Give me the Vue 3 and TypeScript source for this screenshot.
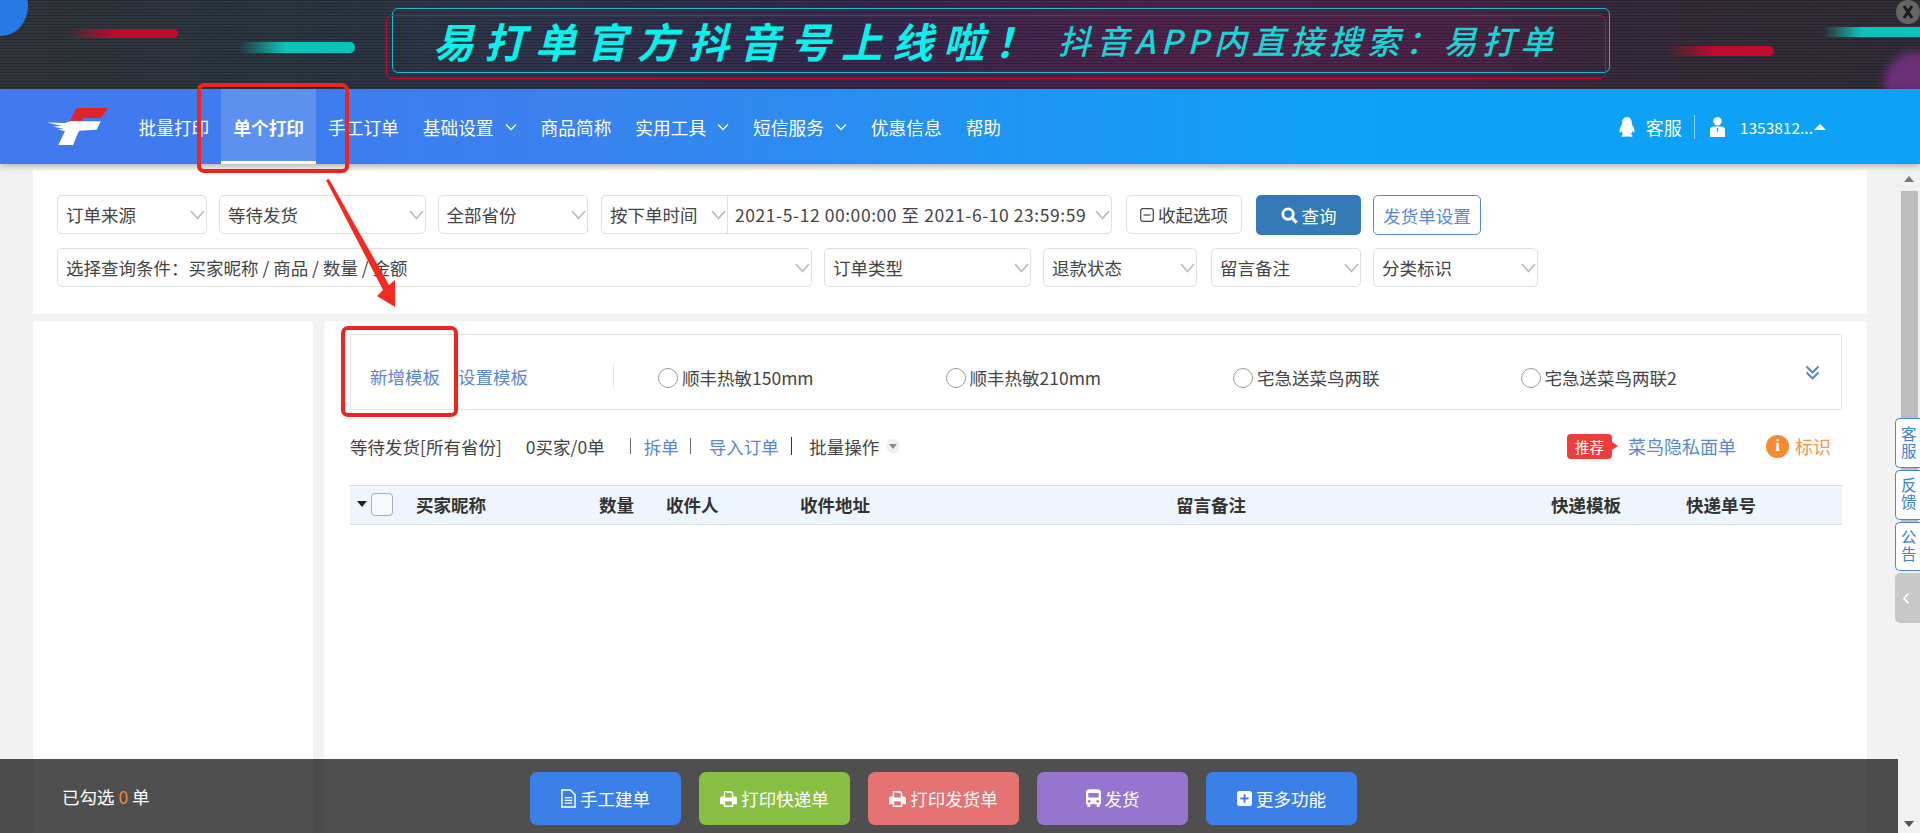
<script setup lang="ts">
interface NavItem { label: string; active?: boolean; caret?: boolean }
const navItems: NavItem[] = [
  { label: '批量打印' },
  { label: '单个打印', active: true },
  { label: '手工订单' },
  { label: '基础设置', caret: true },
  { label: '商品简称' },
  { label: '实用工具', caret: true },
  { label: '短信服务', caret: true },
  { label: '优惠信息' },
  { label: '帮助' },
]
const templates = ['顺丰热敏150mm', '顺丰热敏210mm', '宅急送菜鸟两联', '宅急送菜鸟两联2']
const headers = ['买家昵称', '数量', '收件人', '收件地址', '留言备注', '快递模板', '快递单号']
const sideTabs = ['客服', '反馈', '公告']
</script>

<template>
  <div class="page">
    <header class="banner">
      <span class="blob blob-blue"></span>
      <span class="blob blob-purple"></span>
      <span class="streak red r1"></span>
      <span class="streak teal t1"></span>
      <span class="streak teal t2"></span>
      <span class="streak red r2"></span>
      <div class="frame">
        <span class="title">易打单官方抖音号上线啦！</span>
        <span class="subtitle">抖音APP内直接搜索：易打单</span>
      </div>
      <span class="close">
        <svg viewBox="0 0 24 24" width="24" height="24"><path d="M8 6l8 12M16 6L8 18" stroke="#1c1c1c" stroke-width="3" /></svg>
      </span>
    </header>

    <nav class="nav">
      <svg class="logo" viewBox="0 0 62 38" width="62" height="38">
        <path d="M29.7 0H61L54 10H36L35 12.7H23z" fill="#e02327" />
        <path d="M23 13.3H53.7L49.7 21.7 32 22.7 26 37H11.3L18 23 10 21.5 17 21 6 18.5 15 18 0 14.5 18 15z" fill="#fff" />
      </svg>
      <a v-for="item in navItems" :key="item.label" class="nav-item" :class="{ active: item.active }">
        {{ item.label }}
        <svg v-if="item.caret" class="nav-caret" viewBox="0 0 12 8" width="12" height="8"><path d="M1 1.500l5 5 5-5" fill="none" stroke="#fff" stroke-width="1.300" /></svg>
      </a>
      <div class="nav-right">
        <svg viewBox="0 0 18 20" width="18" height="20"><path fill="#fff" d="M9 0C5.500 0 4.200 3 4.200 6c0 1-.6 2-1.600 4C1.600 12 1 15 2 15.500c.6.2 1.200-.8 1.600-1.600.3 1.400 1 2.600 1.800 3.300-1 .4-2 1-2 1.800C3.400 20 6 20 7.500 19.500c.5-.1 2.500-.1 3 0 1.500.5 4.100.5 4.100-.5 0-.8-1-1.400-2-1.800.8-.7 1.500-1.900 1.800-3.300.4.8 1 1.800 1.600 1.600 1-.5.4-3.500-.6-5.500-1-2-1.600-3-1.600-4C13.800 3 12.500 0 9 0z" /></svg>
        <span class="kefu">客服</span>
        <span class="nav-sep"></span>
        <svg viewBox="0 0 17 20" width="17" height="20"><circle cx="8.500" cy="4.200" r="4.200" fill="#fff" /><path fill="#fff" d="M1 20v-7c0-2 1.500-3.500 3.500-3.500h8c2 0 3.500 1.500 3.500 3.500v7z" /><path d="M8.500 10.500l-1 1.500 1 4 1-4z" fill="#2a9af0" /></svg>
        <span class="account">1353812...</span>
        <svg viewBox="0 0 12 6" width="12" height="6"><path d="M6 0l6 6H0z" fill="#fff" /></svg>
      </div>
    </nav>

    <main class="main">
      <section class="filters">
        <div class="filter-row">
          <div class="sel w150">订单来源<svg class="chev" viewBox="0 0 15 10"><path d="M1 1l6.500 7.500L14 1" /></svg></div>
          <div class="sel w206">等待发货<svg class="chev" viewBox="0 0 15 10"><path d="M1 1l6.500 7.500L14 1" /></svg></div>
          <div class="sel w150">全部省份<svg class="chev" viewBox="0 0 15 10"><path d="M1 1l6.500 7.500L14 1" /></svg></div>
          <div class="sel timepair">
            <span class="time-type">按下单时间<svg class="chev" viewBox="0 0 15 10"><path d="M1 1l6.500 7.500L14 1" /></svg></span>
            <span class="time-range">2021-5-12 00:00:00 至 2021-6-10 23:59:59<svg class="chev" viewBox="0 0 15 10"><path d="M1 1l6.500 7.500L14 1" /></svg></span>
          </div>
          <button class="btn-collapse ml2">
            <svg viewBox="0 0 14 14" width="14" height="14"><rect x=".7" y=".7" width="12.600" height="12.600" rx="2" fill="none" stroke="#444" stroke-width="1.200" /><path d="M3.500 7h7" stroke="#444" stroke-width="1.200" /></svg>
            收起选项
          </button>
          <button class="btn-query ml2">
            <svg viewBox="0 0 18 18" width="17" height="17"><circle cx="7.500" cy="7.500" r="5.500" fill="none" stroke="#fff" stroke-width="3" /><path d="M11.500 11.500L16.500 16.500" stroke="#fff" stroke-width="3.200" /></svg>
            查询
          </button>
          <button class="btn-outline">发货单设置</button>
        </div>
        <div class="filter-row">
          <div class="sel w755">选择查询条件：买家昵称 / 商品 / 数量 / 金额<svg class="chev" viewBox="0 0 15 10"><path d="M1 1l6.500 7.500L14 1" /></svg></div>
          <div class="sel w207">订单类型<svg class="chev" viewBox="0 0 15 10"><path d="M1 1l6.500 7.500L14 1" /></svg></div>
          <div class="sel w154">退款状态<svg class="chev" viewBox="0 0 15 10"><path d="M1 1l6.500 7.500L14 1" /></svg></div>
          <div class="sel w150 ml2">留言备注<svg class="chev" viewBox="0 0 15 10"><path d="M1 1l6.500 7.500L14 1" /></svg></div>
          <div class="sel w165">分类标识<svg class="chev" viewBox="0 0 15 10"><path d="M1 1l6.500 7.500L14 1" /></svg></div>
        </div>
      </section>

      <section class="work">
        <aside class="side"></aside>
        <div class="content">
          <div class="tpl-box">
            <a class="link">新增模板</a>
            <a class="link second">设置模板</a>
            <span class="tpl-sep"></span>
            <div class="tpl-list">
              <label v-for="t in templates" :key="t" class="radio"><i class="radio-dot"></i>{{ t }}</label>
            </div>
            <svg class="tpl-more" viewBox="0 0 15 15" width="15" height="15"><path d="M1.500 1.500l6 6 6-6M1.500 7.500l6 6 6-6" fill="none" stroke="#4a7fe0" stroke-width="1.800" /></svg>
          </div>

          <div class="toolbar">
            <div class="tools-left">
              <span>等待发货[所有省份]</span>
              <span class="count">0买家/0单</span>
              <span class="bar b1"></span>
              <a class="link">拆单</a>
              <span class="bar b2"></span>
              <a class="link">导入订单</a>
              <span class="bar b3"></span>
              <span>批量操作</span>
              <span class="mini-caret"><svg viewBox="0 0 10 6" width="8" height="5"><path d="M0 0h10L5 6z" fill="#888" /></svg></span>
            </div>
            <div class="tools-right">
              <span class="tag">推荐</span>
              <a class="link wide">菜鸟隐私面单</a>
              <span class="info"><i>i</i></span>
              <span class="mark wide">标识</span>
            </div>
          </div>

          <div class="thead">
            <div class="th-check"><i class="tri"></i><i class="checkbox"></i></div>
            <div v-for="h in headers" :key="h" class="th">{{ h }}</div>
          </div>
        </div>
      </section>
    </main>

    <footer class="bottom">
      <div class="picked">已勾选 <em>0</em> 单</div>
      <div class="actions">
        <button class="act blue">
          <svg viewBox="0 0 16 20" width="15" height="19"><path d="M1 1h9l5 5v13H1z" fill="none" stroke="#fff" stroke-width="1.600" /><path d="M4 9h8M4 12h8M4 15h8" stroke="#fff" stroke-width="1.400" /></svg>
          手工建单
        </button>
        <button class="act green">
          <svg viewBox="0 0 18 18" width="17" height="17"><path fill="#fff" fill-rule="evenodd" d="M4 1h8l2 2v4h2a2 2 0 0 1 2 2v6h-4v3H4v-3H0V9a2 2 0 0 1 2-2h2zM5.500 2.500V8h7V3.500h-1zM5.500 12v4.500h7V12z" /></svg>
          打印快递单
        </button>
        <button class="act red">
          <svg viewBox="0 0 18 18" width="17" height="17"><path fill="#fff" fill-rule="evenodd" d="M4 1h8l2 2v4h2a2 2 0 0 1 2 2v6h-4v3H4v-3H0V9a2 2 0 0 1 2-2h2zM5.500 2.500V8h7V3.500h-1zM5.500 12v4.500h7V12z" /></svg>
          打印发货单
        </button>
        <button class="act purple">
          <svg viewBox="0 0 16 20" width="15" height="19"><path fill="#fff" fill-rule="evenodd" d="M4 0h8c2 0 4 1 4 3v13h-1.500v3h-3v-3h-7v3h-3v-3H0V3c0-2 2-3 4-3zM2.500 4v5h11V4zM3.500 11.500a1.500 1.500 0 1 0 .01 0zM12.500 11.500a1.500 1.500 0 1 0 .01 0z" /></svg>
          发货
        </button>
        <button class="act blue">
          <svg viewBox="0 0 16 16" width="15" height="15"><path fill="#fff" fill-rule="evenodd" d="M3 0h10a3 3 0 0 1 3 3v10a3 3 0 0 1-3 3H3a3 3 0 0 1-3-3V3a3 3 0 0 1 3-3zM7 3.500v3.500H3.500v2H7v3.500h2V9h3.500V7H9V3.500z" /></svg>
          更多功能
        </button>
      </div>
    </footer>

    <div class="scrollbar">
      <i class="sb-up"></i>
      <i class="sb-thumb"></i>
      <i class="sb-down"></i>
    </div>

    <div class="side-tabs">
      <a v-for="t in sideTabs" :key="t" class="side-tab"><span>{{ t }}</span></a>
      <a class="side-fold"><svg viewBox="0 0 10 16" width="8" height="13"><path d="M8 2L2.500 8 8 14" fill="none" stroke="#fff" stroke-width="2.200" /></svg></a>
    </div>

    <span class="mark-box box-nav"></span>
    <span class="mark-box box-tpl"></span>
    <svg class="arrow" viewBox="0 0 100 140" width="100" height="140">
      <path d="M6 2L9 1 69 107 75 102 75 129 57 118 63 112z" fill="#f22a24" />
    </svg>
  </div>
</template>

<style scoped>
.page {
  position: relative;
  width: 1920px;
  height: 833px;
  overflow: hidden;
  display: flex;
  flex-direction: column;
  background: #f2f2f2;
  color: #444;
  font-family: "Noto Sans CJK SC", "Liberation Sans", sans-serif;
  font-size: 17.5px;
}
a { cursor: pointer; }
button { font-family: inherit; font-size: 17.5px; cursor: pointer; }
i { font-style: normal; }

/* banner */
.banner {
  position: relative;
  height: 89px;
  flex: none;
  overflow: hidden;
  background:
    repeating-linear-gradient(180deg, rgba(0, 0, 0, .16) 0 1px, rgba(255, 255, 255, .02) 1px 3px),
    linear-gradient(90deg, #2e3138 0%, #28333c 15%, #2b3049 28%, #33264d 45%, #4a2048 60%, #4a2046 75%, #342838 84%, #2c2a32 100%);
}
.blob { position: absolute; border-radius: 50%; }
.blob-blue { left: -26px; top: -24px; width: 54px; height: 60px; background: #2878e6; }
.blob-purple { right: -30px; bottom: -28px; width: 66px; height: 66px; background: #6b2f78; filter: blur(4px); }
.streak { position: absolute; border-radius: 0 5px 5px 0; }
.streak.red { background: linear-gradient(90deg, rgba(190, 10, 40, 0), #c00a2c 45%); }
.streak.teal { background: linear-gradient(90deg, rgba(10, 200, 190, 0), #0cc4bc 40%); }
.r1 { left: 67px; top: 29px; width: 111px; height: 9px; }
.t1 { left: 239px; top: 42px; width: 116px; height: 11px; }
.t2 { left: 1823px; top: 27px; width: 97px; height: 10px; border-radius: 0; }
.r2 { left: 1667px; top: 46px; width: 107px; height: 10px; }
.frame {
  position: relative;
  box-sizing: border-box;
  margin: 8px 0 0 392px;
  width: 1218px;
  height: 65px;
  border: 1px solid #22b8c8;
  border-radius: 6px;
  display: flex;
  align-items: center;
  padding-left: 40px;
  white-space: nowrap;
}
.frame::before {
  content: "";
  position: absolute;
  left: -7px;
  top: 6px;
  right: 3px;
  bottom: -7px;
  border: 1px solid #c20c34;
  border-radius: 6px;
}
.title {
  color: #0af0ea;
  font-size: 41px;
  font-style: italic;
  font-weight: 700;
  letter-spacing: 10px;
  line-height: 1;
  width: 625px;
}
.subtitle {
  color: #18d4d4;
  font-size: 33px;
  font-style: italic;
  font-weight: 500;
  letter-spacing: 5.300px;
  line-height: 1;
}
.close {
  position: absolute;
  right: 0;
  top: 0;
  width: 24px;
  height: 24px;
  border-radius: 50%;
  background: #666;
  display: flex;
}

/* nav */
.nav {
  position: relative;
  z-index: 2;
  height: 75px;
  flex: none;
  display: flex;
  align-items: center;
  padding-left: 47px;
  color: #fff;
  background: linear-gradient(90deg, #4278ee 0%, #3a82ee 30%, #1c96f2 55%, #0ea2f6 72%, #0ea2f6 100%);
  box-shadow: 0 2px 6px rgba(0, 0, 0, .28);
}
.logo { flex: none; margin-right: 17.500px; }
.nav-item {
  box-sizing: border-box;
  height: 100%;
  padding: 0 12px;
  display: flex;
  align-items: center;
  font-size: 17.7px;
  white-space: nowrap;
  border-bottom: 0 solid #fff;
}
.nav-item.active {
  background: rgba(255, 255, 255, .16);
  font-weight: 700;
  border-bottom-width: 3px;
  padding-top: 3px;
}
.nav-caret { margin-left: 11px; }
.nav-right {
  margin-left: auto;
  margin-right: 94px;
  display: flex;
  align-items: center;
  height: 100%;
}
.kefu { font-size: 18px; margin-left: 10px; }
.nav-sep { width: 1px; height: 24px; background: rgba(255, 255, 255, .55); margin: 0 14px 0 12px; }
.account { font-size: 15.500px; margin: 0 1px 0 14px; }

/* filters */
.main {
  flex: 1;
  min-height: 0;
  display: flex;
  flex-direction: column;
  padding: 6px 53px 0 33px;
}
.filters {
  box-sizing: border-box;
  height: 144px;
  flex: none;
  padding: 25px 0 0 24px;
  background: #fff;
  display: flex;
  flex-direction: column;
  gap: 14px;
}
.filter-row { display: flex; gap: 12px; height: 39px; }
.sel {
  box-sizing: border-box;
  height: 39px;
  flex: none;
  position: relative;
  display: flex;
  align-items: center;
  padding-left: 8px;
  border: 1px solid #e0e0e0;
  border-radius: 5px;
  background: #fff;
  white-space: nowrap;
}
.chev {
  position: absolute;
  right: 1px;
  top: 14px;
  width: 15px;
  height: 10px;
  fill: none;
  stroke: #bdbdbd;
  stroke-width: 1.800;
}
.w150 { width: 150px; }
.w154 { width: 154px; }
.w165 { width: 165px; }
.w206 { width: 206.500px; }
.w207 { width: 207px; }
.w755 { width: 755px; }
.ml2 { margin-left: 2px; }
.timepair { width: 511px; padding: 0; margin-left: 1.500px; }
.time-type {
  box-sizing: border-box;
  position: relative;
  width: 126px;
  height: 100%;
  padding-left: 8px;
  display: flex;
  align-items: center;
  border-right: 1px solid #e0e0e0;
}
.time-range {
  position: relative;
  flex: 1;
  height: 100%;
  padding-left: 7px;
  display: flex;
  align-items: center;
  letter-spacing: .56px;
}
.btn-collapse {
  box-sizing: border-box;
  width: 116px;
  height: 39px;
  border: 1px solid #e0e0e0;
  border-radius: 5px;
  background: #fff;
  color: #444;
  padding: 0;
  display: flex;
  align-items: center;
  justify-content: center;
  gap: 4px;
}
.btn-query {
  box-sizing: border-box;
  width: 105px;
  height: 40px;
  border: 0;
  border-radius: 5px;
  background: #337ab7;
  color: #fff;
  padding: 0;
  display: flex;
  align-items: center;
  justify-content: center;
  gap: 4px;
}
.btn-outline {
  box-sizing: border-box;
  width: 108px;
  height: 40px;
  border: 1px solid #5a86d8;
  border-radius: 5px;
  background: #fff;
  color: #5a86d8;
  padding: 0;
}

/* work area */
.work {
  flex: 1;
  min-height: 0;
  margin-top: 7px;
  display: flex;
  gap: 11px;
}
.side { width: 280px; flex: none; background: #fff; border-radius: 4px 4px 0 0; }
.content {
  flex: 1;
  min-width: 0;
  box-sizing: border-box;
  background: #fff;
  border-radius: 4px 4px 0 0;
  padding: 13px 25px 0 26px;
}
.tpl-box {
  box-sizing: border-box;
  height: 76px;
  display: flex;
  align-items: center;
  padding: 8px 21px 0 19px;
  border: 1px solid #e6e6e6;
  white-space: nowrap;
}
.link { color: #5a86d8; }
.wide { font-size: 18px; }
.second { margin-left: 18px; }
.tpl-sep { width: 1px; height: 24px; background: #e6e6e6; margin: 0 0 0 85px; }
.tpl-list {
  flex: 1;
  margin-left: 44px;
  display: grid;
  grid-template-columns: repeat(3, 287.500px) 1fr;
  padding-top: 3px;
}
.radio { display: flex; align-items: center; color: #444; }
.radio-dot {
  box-sizing: border-box;
  width: 20px;
  height: 20px;
  border: 1px solid #999;
  border-radius: 50%;
  margin-right: 4px;
  background: #fff;
}
.tpl-more { flex: none; margin-left: -2px; margin-bottom: 8px; }
.toolbar {
  box-sizing: border-box;
  height: 75px;
  display: flex;
  align-items: center;
  justify-content: space-between;
  padding: 0 11px 3px 0;
  white-space: nowrap;
}
.tools-left, .tools-right { display: flex; align-items: center; }
.count { margin-left: 24px; }
.bar { width: 1px; height: 16px; background: #666; }
.b1 { margin: 0 13px 0 25px; }
.b2 { margin: 0 18px 0 11px; }
.b3 { margin: 0 17px 0 12px; width: 1.500px; height: 18px; background: #333; }
.mini-caret {
  width: 14px;
  height: 14px;
  margin-left: 7px;
  border-radius: 50%;
  background: #f0f0f0;
  display: flex;
  align-items: center;
  justify-content: center;
}
.tag {
  position: relative;
  box-sizing: border-box;
  width: 45px;
  height: 25px;
  border-radius: 4px;
  background: #ee3d3d;
  color: #fff;
  font-size: 14.500px;
  text-align: center;
  line-height: 25px;
  margin-right: 16px;
}
.tag::after {
  content: "";
  position: absolute;
  left: 100%;
  top: 8px;
  border: 4px solid transparent;
  border-left: 6px solid #ee3d3d;
  border-right: 0;
}
.info {
  width: 23px;
  height: 23px;
  border-radius: 50%;
  background: #f58a2f;
  color: #fff;
  margin: 0 6px 0 30px;
  display: flex;
  align-items: center;
  justify-content: center;
  font: italic 700 17px "Liberation Serif", serif;
}
.mark { color: #f2954a; }
.thead {
  box-sizing: border-box;
  height: 40px;
  padding-bottom: 2px;
  display: grid;
  grid-template-columns: 66px 183px 67px 134px 376px 375px 135px 1fr;
  align-items: center;
  background: #eef5fc;
  border-top: 1px solid #d8dfe8;
  border-bottom: 1px solid #d8dfe8;
  font-weight: 700;
  color: #333;
}
.th { white-space: nowrap; }
.th-check { display: flex; align-items: center; padding-left: 7px; }
.tri {
  width: 0;
  height: 0;
  border: 5px solid transparent;
  border-top: 6px solid #222;
  border-bottom: 0;
  margin-right: 4px;
}
.checkbox {
  box-sizing: border-box;
  width: 22px;
  height: 23px;
  border: 1px solid #aab;
  border-radius: 4px;
  background: #f7fafd;
}

/* bottom bar */
.bottom {
  position: absolute;
  left: 0;
  bottom: 0;
  z-index: 3;
  width: 1898px;
  height: 74px;
  background: rgba(0, 0, 0, .69);
  color: #fff;
  display: flex;
  align-items: center;
}
.picked { width: 530px; padding-left: 62px; box-sizing: border-box; font-size: 17.500px; }
.picked em { font-style: normal; color: #f08a30; }
.actions { display: flex; gap: 18px; margin-top: 4px; }
.act {
  box-sizing: border-box;
  width: 151px;
  height: 53px;
  border: 0;
  border-radius: 7px;
  color: #fff;
  padding: 0;
  display: flex;
  align-items: center;
  justify-content: center;
  gap: 4px;
}
.blue { background: #3b80e8; }
.green { background: #89c044; }
.red { background: #e57373; }
.purple { background: #9575cd; }

/* scrollbar */
.scrollbar {
  position: absolute;
  right: 0;
  top: 164px;
  bottom: 0;
  width: 22px;
  background: #f1f1f1;
  z-index: 1;
}
.sb-up, .sb-down {
  position: absolute;
  left: 6px;
  width: 0;
  height: 0;
  border: 5px solid transparent;
}
.sb-up { top: 12px; border-bottom: 6px solid #777; border-top: 0; }
.sb-down { bottom: 6px; border-top: 6px solid #555; border-bottom: 0; }
.sb-thumb {
  position: absolute;
  left: 3px;
  top: 27px;
  width: 17px;
  height: 380px;
  background: #bdbdbd;
}

/* side tabs */
.side-tabs {
  position: absolute;
  right: 0;
  top: 418px;
  z-index: 4;
  width: 25px;
  display: flex;
  flex-direction: column;
  gap: 2px;
}
.side-tab {
  box-sizing: border-box;
  height: 50px;
  border: 1px solid #4a86d8;
  border-right: 0;
  border-radius: 5px 0 0 5px;
  background: #fff;
  color: #3c80d8;
  display: flex;
  align-items: center;
  justify-content: center;
}
.side-tab span {
  writing-mode: vertical-rl;
  text-orientation: upright;
  font-size: 15.500px;
  letter-spacing: 2px;
  line-height: 1;
}
.side-tab + .side-tab { height: 49.500px; }
.side-fold {
  box-sizing: border-box;
  height: 50px;
  background: #c8c8c8;
  border-radius: 5px 0 0 5px;
  display: flex;
  align-items: center;
  justify-content: center;
  padding-right: 4px;
}

/* annotations */
.mark-box {
  position: absolute;
  z-index: 5;
  box-sizing: border-box;
  border: 4px solid #f0241e;
  border-radius: 7px;
}
.box-nav { left: 197px; top: 83px; width: 152px; height: 90px; }
.box-tpl { left: 341px; top: 326px; width: 117px; height: 91px; }
.arrow { position: absolute; z-index: 5; left: 320px; top: 178px; }
</style>

<style>
html, body { margin: 0; overflow: hidden; background: #f2f2f2; }
</style>
